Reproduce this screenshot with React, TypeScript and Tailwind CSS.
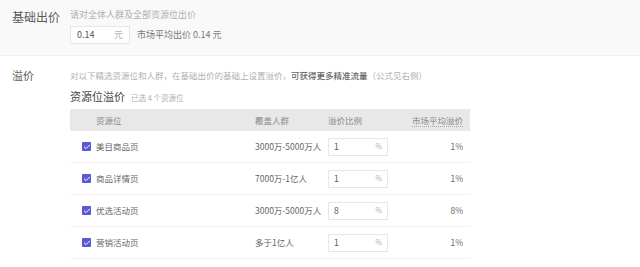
import { Check } from 'lucide-react'

const rows = [
    { name: '美目商品页', crowd: '3000万-5000万人', ratio: '1', avg: '1%' },
    { name: '商品详情页', crowd: '7000万-1亿人', ratio: '1', avg: '1%' },
    { name: '优选活动页', crowd: '3000万-5000万人', ratio: '8', avg: '8%' },
    { name: '营销活动页', crowd: '多于1亿人', ratio: '1', avg: '1%' },
]

export default function App() {
    return (
        <div
            className="w-[640px] h-[267px] overflow-hidden bg-white text-[#666]"
            style={{ fontFamily: '"Noto Sans CJK SC", "Noto Sans", sans-serif' }}
        >
            {/* base bid */}
            <div className="flex h-[56px] bg-[#f9f9f9] border-b border-[#efefef]">
                <div className="w-[70px] pl-3 pt-[9px] text-[12px] leading-[16px] text-[#5a5a5a]">基础出价</div>
                <div className="flex flex-col pt-[8px]">
                    <div className="text-[9px] leading-[13px] text-[#b0b0b0]">请对全体人群及全部资源位出价</div>
                    <div className="flex items-center gap-[7px] mt-[5px]">
                        <div className="flex items-center justify-between w-[60px] h-[18px] bg-white border border-[#e6e6e6] px-[6px] text-[9px]">
                            <span className="text-[#555]">0.14</span>
                            <span className="text-[#b0b0b0]">元</span>
                        </div>
                        <span className="text-[9px] text-[#777]">市场平均出价 0.14 元</span>
                    </div>
                </div>
            </div>

            {/* premium */}
            <div className="flex pt-[11px]">
                <div className="w-[70px] pl-3 text-[11px] leading-[16px] text-[#5a5a5a]">溢价</div>
                <div className="flex flex-col">
                    <div className="text-[8.5px] leading-[16px] text-[#b0b0b0]">
                        对以下精选资源位和人群，在基础出价的基础上设置溢价，<span className="text-[#666] font-medium">可获得更多精准流量</span>（公式见右侧）
                    </div>
                    <div className="flex items-end gap-[6px] mt-[6px]">
                        <span className="text-[11px] leading-[15px] text-[#444]">资源位溢价</span>
                        <span className="text-[7.5px] leading-[13px] text-[#b0b0b0]">已选 4 个资源位</span>
                    </div>
                    <div className="w-[400px] mt-[5px]">
                        <div className="flex items-center h-[22px] bg-[#e8e8e8] text-[8.5px] text-[#888]">
                            <div className="w-[185px] pl-[26px]">资源位</div>
                            <div className="w-[73px]">覆盖人群</div>
                            <div className="w-[70px]">溢价比例</div>
                            <div className="flex-1 text-right pr-[7px]">
                                <span className="border-b border-dotted border-[#aaa]">市场平均溢价</span>
                            </div>
                        </div>
                        {rows.map((r) => (
                            <div key={r.name} className="flex items-center h-[32px] border-b border-[#f2f2f2] text-[8.5px] text-[#666]">
                                <div className="w-[185px] pl-3 flex items-center gap-[5px]">
                                    <span className="flex items-center justify-center w-[9px] h-[9px] bg-[#5858d8] rounded-[1px]">
                                        <Check size={8} strokeWidth={3} className="text-white" />
                                    </span>
                                    <span>{r.name}</span>
                                </div>
                                <div className="w-[73px]">{r.crowd}</div>
                                <div className="w-[70px]">
                                    <div className="flex items-center justify-between w-[60px] h-[18px] border border-[#e6e6e6] px-[5px]">
                                        <span className="text-[#555]">{r.ratio}</span>
                                        <span className="text-[#b0b0b0] text-[7px]">%</span>
                                    </div>
                                </div>
                                <div className="flex-1 text-right pr-[7px]">{r.avg}</div>
                            </div>
                        ))}
                    </div>
                </div>
            </div>
        </div>
    )
}
